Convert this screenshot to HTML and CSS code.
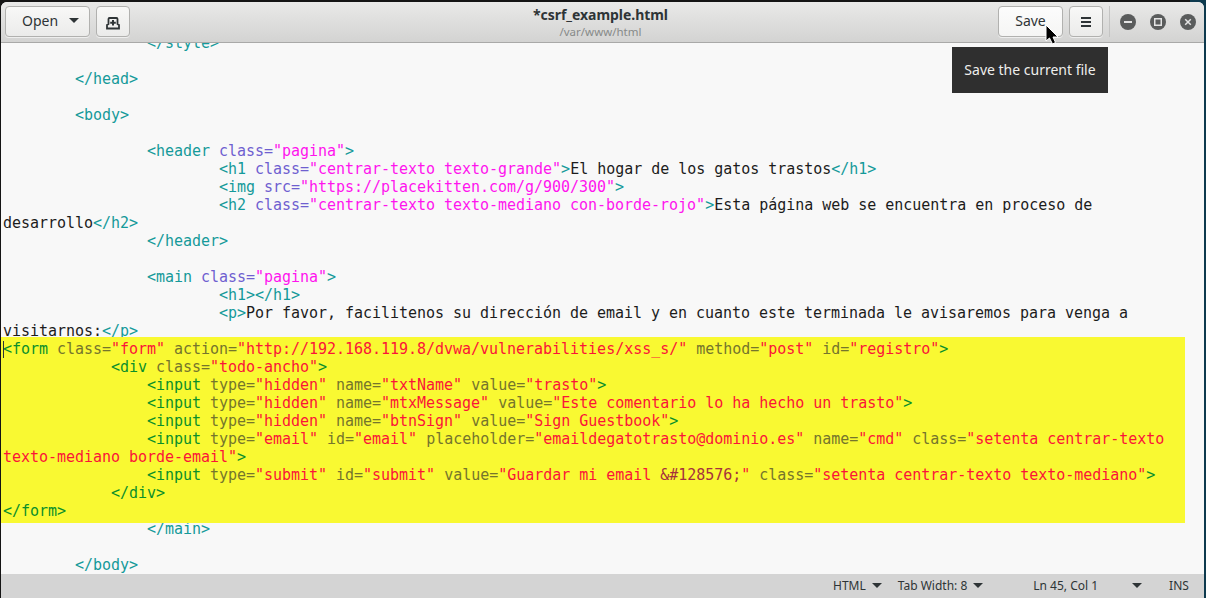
FILE: index.html
```html
<!DOCTYPE html>
<html lang="en">
<head>
<meta charset="utf-8">
<title>csrf_example.html</title>
<link rel="stylesheet" href="styles.css">
</head>
<body>
<div class="window">
  <header class="titlebar">
    <div class="group-left">
      <button class="btn btn-open"><span>Open</span><i class="caret"></i></button>
      <button class="btn btn-icon" aria-label="New tab">
        <svg width="16" height="16" viewBox="0 0 16 16"><path d="M3.500 10V5Q3.500 4 4.500 4H11.500Q12.500 4 12.500 5V10L14 11V14.500H2V11Z" fill="none" stroke="#2e3436" stroke-width="1.800"/><path d="M7 6h2v1.700h1.800v2H9V11.500H7V9.700H5.200v-2H7z" fill="#2e3436"/></svg>
      </button>
    </div>
    <div class="title">
      <div class="title-main">*csrf_example.html</div>
      <div class="title-sub">/var/www/html</div>
    </div>
    <div class="group-right">
      <button class="btn btn-save">Save</button>
      <button class="btn btn-icon" aria-label="Menu">
        <svg width="16" height="16" viewBox="0 0 16 16"><path d="M3 3h10v2H3zM3 7h10v2H3zM3 11h10v2H3z" fill="#2e3436"/></svg>
      </button>
      <div class="sep"></div>
      <div class="wm">
        <svg width="16" height="16" viewBox="0 0 16 16"><circle cx="8" cy="8" r="8" fill="#5a5c5c"/><rect x="4" y="7" width="8" height="2" fill="#e4e4e4"/></svg>
        <svg width="16" height="16" viewBox="0 0 16 16"><circle cx="8" cy="8" r="8" fill="#5a5c5c"/><rect x="4.750" y="4.750" width="6.500" height="6.500" fill="none" stroke="#e4e4e4" stroke-width="1.500"/></svg>
        <svg width="16" height="16" viewBox="0 0 16 16"><circle cx="8" cy="8" r="8" fill="#5a5c5c"/><path d="M5.200 5.200l5.600 5.600M10.800 5.200l-5.600 5.600" stroke="#e4e4e4" stroke-width="1.500"/></svg>
      </div>
    </div>
  </header>

  <main class="editor">
<pre class="code">		<span class="t">&lt;/style&gt;</span>

	<span class="t">&lt;/head&gt;</span>

	<span class="t">&lt;body&gt;</span>

		<span class="t">&lt;header</span> <span class="a">class=</span><span class="v">"pagina"</span><span class="t">&gt;</span>
			<span class="t">&lt;h1</span> <span class="a">class=</span><span class="v">"centrar-texto texto-grande"</span><span class="t">&gt;</span>El hogar de los gatos trastos<span class="t">&lt;/h1&gt;</span>
			<span class="t">&lt;img</span> <span class="a">src=</span><span class="v">"https://placekitten.com/g/900/300"</span><span class="t">&gt;</span>
			<span class="t">&lt;h2</span> <span class="a">class=</span><span class="v">"centrar-texto texto-mediano con-borde-rojo"</span><span class="t">&gt;</span>Esta página web se encuentra en proceso de
desarrollo<span class="t">&lt;/h2&gt;</span>
		<span class="t">&lt;/header&gt;</span>

		<span class="t">&lt;main</span> <span class="a">class=</span><span class="v">"pagina"</span><span class="t">&gt;</span>
			<span class="t">&lt;h1&gt;&lt;/h1&gt;</span>
			<span class="t">&lt;p&gt;</span>Por favor, facilitenos su dirección de email y en cuanto este terminada le avisaremos para venga a
visitarnos:<span class="t">&lt;/p&gt;</span>
<div class="selection"><span class="cursor"></span><span class="st">&lt;form</span> <span class="sa">class=</span><span class="sv">"form"</span> <span class="sa">action=</span><span class="sv">"http://192.168.119.8/dvwa/vulnerabilities/xss_s/"</span> <span class="sa">method=</span><span class="sv">"post"</span> <span class="sa">id=</span><span class="sv">"registro"</span><span class="st">&gt;</span>
            <span class="st">&lt;div</span> <span class="sa">class=</span><span class="sv">"todo-ancho"</span><span class="st">&gt;</span>
                <span class="st">&lt;input</span> <span class="sa">type=</span><span class="sv">"hidden"</span> <span class="sa">name=</span><span class="sv">"txtName"</span> <span class="sa">value=</span><span class="sv">"trasto"</span><span class="st">&gt;</span>
                <span class="st">&lt;input</span> <span class="sa">type=</span><span class="sv">"hidden"</span> <span class="sa">name=</span><span class="sv">"mtxMessage"</span> <span class="sa">value=</span><span class="sv">"Este comentario lo ha hecho un trasto"</span><span class="st">&gt;</span>
                <span class="st">&lt;input</span> <span class="sa">type=</span><span class="sv">"hidden"</span> <span class="sa">name=</span><span class="sv">"btnSign"</span> <span class="sa">value=</span><span class="sv">"Sign Guestbook"</span><span class="st">&gt;</span>
                <span class="st">&lt;input</span> <span class="sa">type=</span><span class="sv">"email"</span> <span class="sa">id=</span><span class="sv">"email"</span> <span class="sa">placeholder=</span><span class="sv">"emaildegatotrasto@dominio.es"</span> <span class="sa">name=</span><span class="sv">"cmd"</span> <span class="sa">class=</span><span class="sv">"setenta centrar-texto
texto-mediano borde-email"</span><span class="st">&gt;</span>
                <span class="st">&lt;input</span> <span class="sa">type=</span><span class="sv">"submit"</span> <span class="sa">id=</span><span class="sv">"submit"</span> <span class="sa">value=</span><span class="sv">"Guardar mi email </span><span class="se">&amp;#128576;</span><span class="sv">"</span> <span class="sa">class=</span><span class="sv">"setenta centrar-texto texto-mediano"</span><span class="st">&gt;</span>
            <span class="st">&lt;/div&gt;</span>
<span class="st">&lt;/form&gt;</span></div>		<span class="t">&lt;/main&gt;</span>

	<span class="t">&lt;/body&gt;</span></pre>
  </main>

  <footer class="statusbar">
    <span class="st-item st-lang">HTML<i class="caret"></i></span>
    <span class="st-item st-tab">Tab Width: 8<i class="caret"></i></span>
    <span class="st-item st-pos">Ln 45, Col 1</span>
    <i class="caret st-more"></i>
    <span class="st-item st-ins">INS</span>
  </footer>

  <div class="tooltip">Save the current file</div>
  <svg class="pointer" width="16" height="24" viewBox="0 0 16 24"><path d="M1 1V17L4.500 14L7.500 20L10.500 18.500L8 13H13Z" fill="#000" stroke="#fff" stroke-width="1"/></svg>
</div>
</body>
</html>
```
FILE: styles.css
```css
* { box-sizing: border-box; }
html, body { margin: 0; height: 100%; overflow: hidden; }
body {
  background: linear-gradient(to right, #141414 0, #141414 1190px, #0e3a4e 1190px);
  font-family: "Noto Sans", "Open Sans", sans-serif;
}
.window {
  position: relative;
  margin: 2px 2px 0 1px;
  height: 596px;
  display: flex;
  flex-direction: column;
  background: #f8f8f8;
  border-radius: 6px 6px 0 0;
  overflow: hidden;
  color: #2e3436;
}
.titlebar {
  flex: none;
  height: 41px;
  display: grid;
  grid-template-columns: 1fr auto 1fr;
  align-items: center;
  padding: 0 8px 1px 4px;
  background: linear-gradient(#e9e9e8, #d3d3d2);
  border-bottom: 1px solid #a9a9a8;
}
.group-left, .group-right { display: flex; align-items: center; gap: 6px; }
.group-right { justify-content: flex-end; }
.btn {
  height: 31px;
  padding: 0 0 2px;
  display: inline-flex;
  align-items: center;
  justify-content: center;
  border: 1px solid #b1b1af;
  border-radius: 4px;
  background: linear-gradient(#f8f8f7, #ebebea);
  box-shadow: 0 1px 0 rgba(255,255,255,.6);
  color: #2e3436;
  font: 14px "Noto Sans", "Open Sans", sans-serif;
}
.btn-open { width: 85px; gap: 11px; justify-content: flex-start; padding-left: 16px; }
.btn-icon { width: 34px; padding: 0; }
.btn-save { width: 65px; background: linear-gradient(#fcfcfc, #f5f5f4); }
.caret {
  display: inline-block;
  width: 0;
  height: 0;
  border-left: 5px solid transparent;
  border-right: 5px solid transparent;
  border-top: 5px solid #2e3436;
}
.title { text-align: center; padding-top: 1px; }
.title-main { font-size: 14px; font-weight: 700; line-height: 17px; letter-spacing: -0.05px; color: #2e3436; }
.title-sub { font-size: 11.500px; line-height: 15px; color: #878a89; margin-top: 1px; }
.sep { width: 1px; height: 31px; background: #c4c4c3; }
.wm { display: flex; gap: 14px; margin-left: 4px; }
.wm svg { display: block; }

.editor { flex: 1; min-height: 0; overflow: hidden; }
.code {
  margin: -9px 0 0;
  padding-left: 2px;
  font: 15px/18px "DejaVu Sans Mono", monospace;
  letter-spacing: -0.03px;
  tab-size: 8;
  color: #1c1c1c;
}
.t { color: #159a9a; }
.a { color: #6f5fd0; }
.v { color: #ff14ee; }
.selection {
  position: relative;
  width: 1184px;
  margin: -3px 0 -3px -2px;
  padding: 3px 0 3px 2px;
  background: #f9f932;
  white-space: pre;
}
.cursor {
  position: absolute;
  left: 2px;
  top: 4px;
  width: 1px;
  height: 17px;
  background: #2e3436;
}
.st { color: #0a8f2a; }
.sa { color: #75752c; }
.sv { color: #fb1438; }
.se { color: #a5323c; }

.statusbar {
  flex: none;
  height: 24px;
  display: flex;
  align-items: center;
  padding-bottom: 1px;
  background: #d4d4d4;
  font-size: 12px;
  color: #2e3436;
}
.st-item { display: inline-flex; align-items: center; gap: 6px; white-space: nowrap; }
.st-lang { margin-left: 832px; }
.st-tab { margin-left: 16px; }
.st-pos { margin-left: 50px; }
.st-more { margin-left: 34px; }
.st-ins { margin-left: 27px; }

.tooltip {
  position: absolute;
  left: 951px;
  top: 45px;
  width: 156px;
  height: 46px;
  display: flex;
  align-items: center;
  justify-content: center;
  padding-bottom: 2px;
  background: #2f2f2f;
  color: #eeeeec;
  font-size: 14px;
}
.pointer { position: absolute; left: 1044px; top: 22px; }
```
